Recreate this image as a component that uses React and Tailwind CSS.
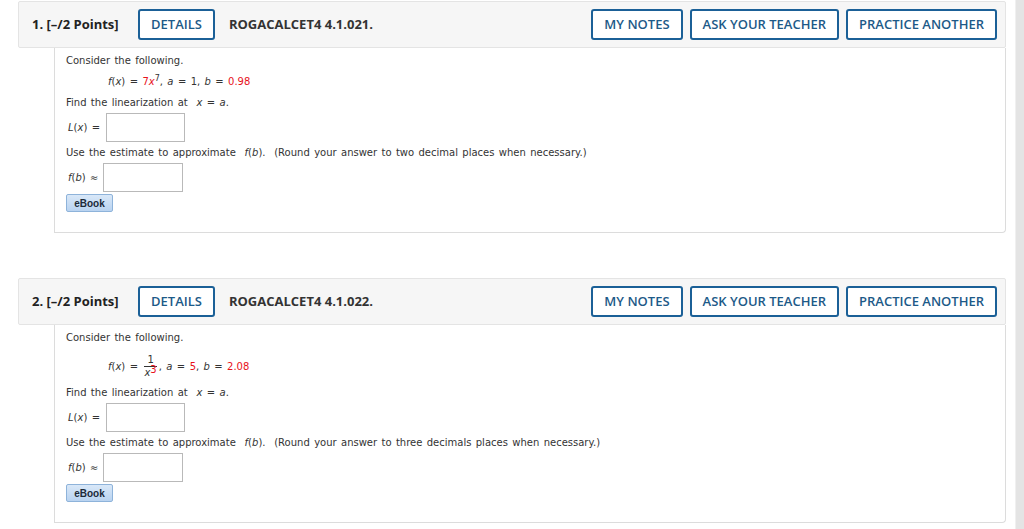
import React from 'react';

const HeaderButton = ({ children }) => (
    <button type="button" className="h-[31px] px-[11px] border-2 border-[#1b6097] rounded-[3px] bg-white text-[13px] font-semibold text-[#1d5a88]">
        {children}
    </button>
);

const AnswerBox = ({ w }) => (
    <div className={`${w} h-[29px] border border-[#b9b9b9] bg-white`} />
);

const Question = ({ num, code, formula, roundText }) => {
    return (
        <div>
            <div className="flex items-center h-[47px] pl-[13px] pr-[8px] bg-[#f6f6f6] border border-[#e4e4e4] rounded-[2px] font-['Open_Sans',sans-serif]">
                <span className="text-[13px] font-bold text-[#222] w-[106px]">{num}. [–/2 Points]</span>
                <HeaderButton>DETAILS</HeaderButton>
                <span className="ml-[14px] text-[13px] font-bold text-[#333]">{code}</span>
                <div className="ml-auto flex gap-[7px]">
                    <HeaderButton>MY NOTES</HeaderButton>
                    <HeaderButton>ASK YOUR TEACHER</HeaderButton>
                    <HeaderButton>PRACTICE ANOTHER</HeaderButton>
                </div>
            </div>
            <div className="ml-[36px] border-l border-r border-b border-[#dcdcdc] rounded-br-[4px] bg-white pl-[11px] pt-[7px] pb-[20px] text-[10px] text-[#333] [word-spacing:1.2px] font-['DejaVu_Sans',Verdana,sans-serif]">
                <p className="leading-[12px]">Consider the following.</p>
                {formula}
                <p className="leading-[12px]">Find the linearization at &nbsp;<i>x</i> = <i>a</i>.</p>
                <div className="flex items-center mt-[4px]">
                    <span className="ml-[2px] w-[38px]"><i>L</i>(<i>x</i>) =</span>
                    <AnswerBox w="w-[79px]" />
                </div>
                <p className="leading-[12px] mt-[5px]">Use the estimate to approximate &nbsp;<i>f</i>(<i>b</i>). &nbsp;(Round your answer to {roundText} when necessary.)</p>
                <div className="flex items-center mt-[4px]">
                    <span className="ml-[2px] w-[35px]"><i>f</i>(<i>b</i>) ≈</span>
                    <AnswerBox w="w-[80px]" />
                </div>
                <button type="button" className="mt-[2px] w-[47px] h-[18px] rounded-[2px] border border-[#8eb3da] bg-gradient-to-b from-[#d9e8f8] to-[#b9d3f0] text-[10px] font-bold text-[#1c2a3a] font-['Liberation_Sans',Arial,sans-serif]">
                    eBook
                </button>
            </div>
        </div>
    );
};

const App = () => {
    const formula1 = (
        <p className="leading-[12px] mt-[9px] mb-[9px] ml-[42px]">
            <i>f</i>(<i>x</i>) = <span className="text-[#e8121b]">7<i>x</i></span><sup className="text-[8px]">7</sup>, <i>a</i> = 1, <i>b</i> = <span className="text-[#e8121b]">0.98</span>
        </p>
    );
    const formula2 = (
        <div className="flex items-center ml-[42px] mt-[6px] mb-[5px] h-[32px]">
            <span><i>f</i>(<i>x</i>) =&nbsp;</span>
            <span className="inline-flex flex-col items-center mx-[2px]">
                <span className="leading-[12px] px-[3px] border-b border-[#333]">1</span>
                <span className="leading-[12px]"><i>x</i><span className="text-[#e8121b] relative top-[-3px]">3</span></span>
            </span>
            <span>, <i>a</i> = <span className="text-[#e8121b]">5</span>, <i>b</i> = <span className="text-[#e8121b]">2.08</span></span>
        </div>
    );
    return (
        <div className="flex w-[1024px] h-[529px] bg-white overflow-hidden">
            <div className="flex-1 pl-[18px] pr-[9px] pt-[1px]">
                <Question num={1} code="ROGACALCET4 4.1.021." formula={formula1} roundText="two decimal places" />
                <div className="h-[45px]" />
                <Question num={2} code="ROGACALCET4 4.1.022." formula={formula2} roundText="three decimals places" />
            </div>
            <div className="w-[9px] h-full bg-[#e4e4e4] border-l border-[#f0f0f0]" />
        </div>
    );
};

export default App;
